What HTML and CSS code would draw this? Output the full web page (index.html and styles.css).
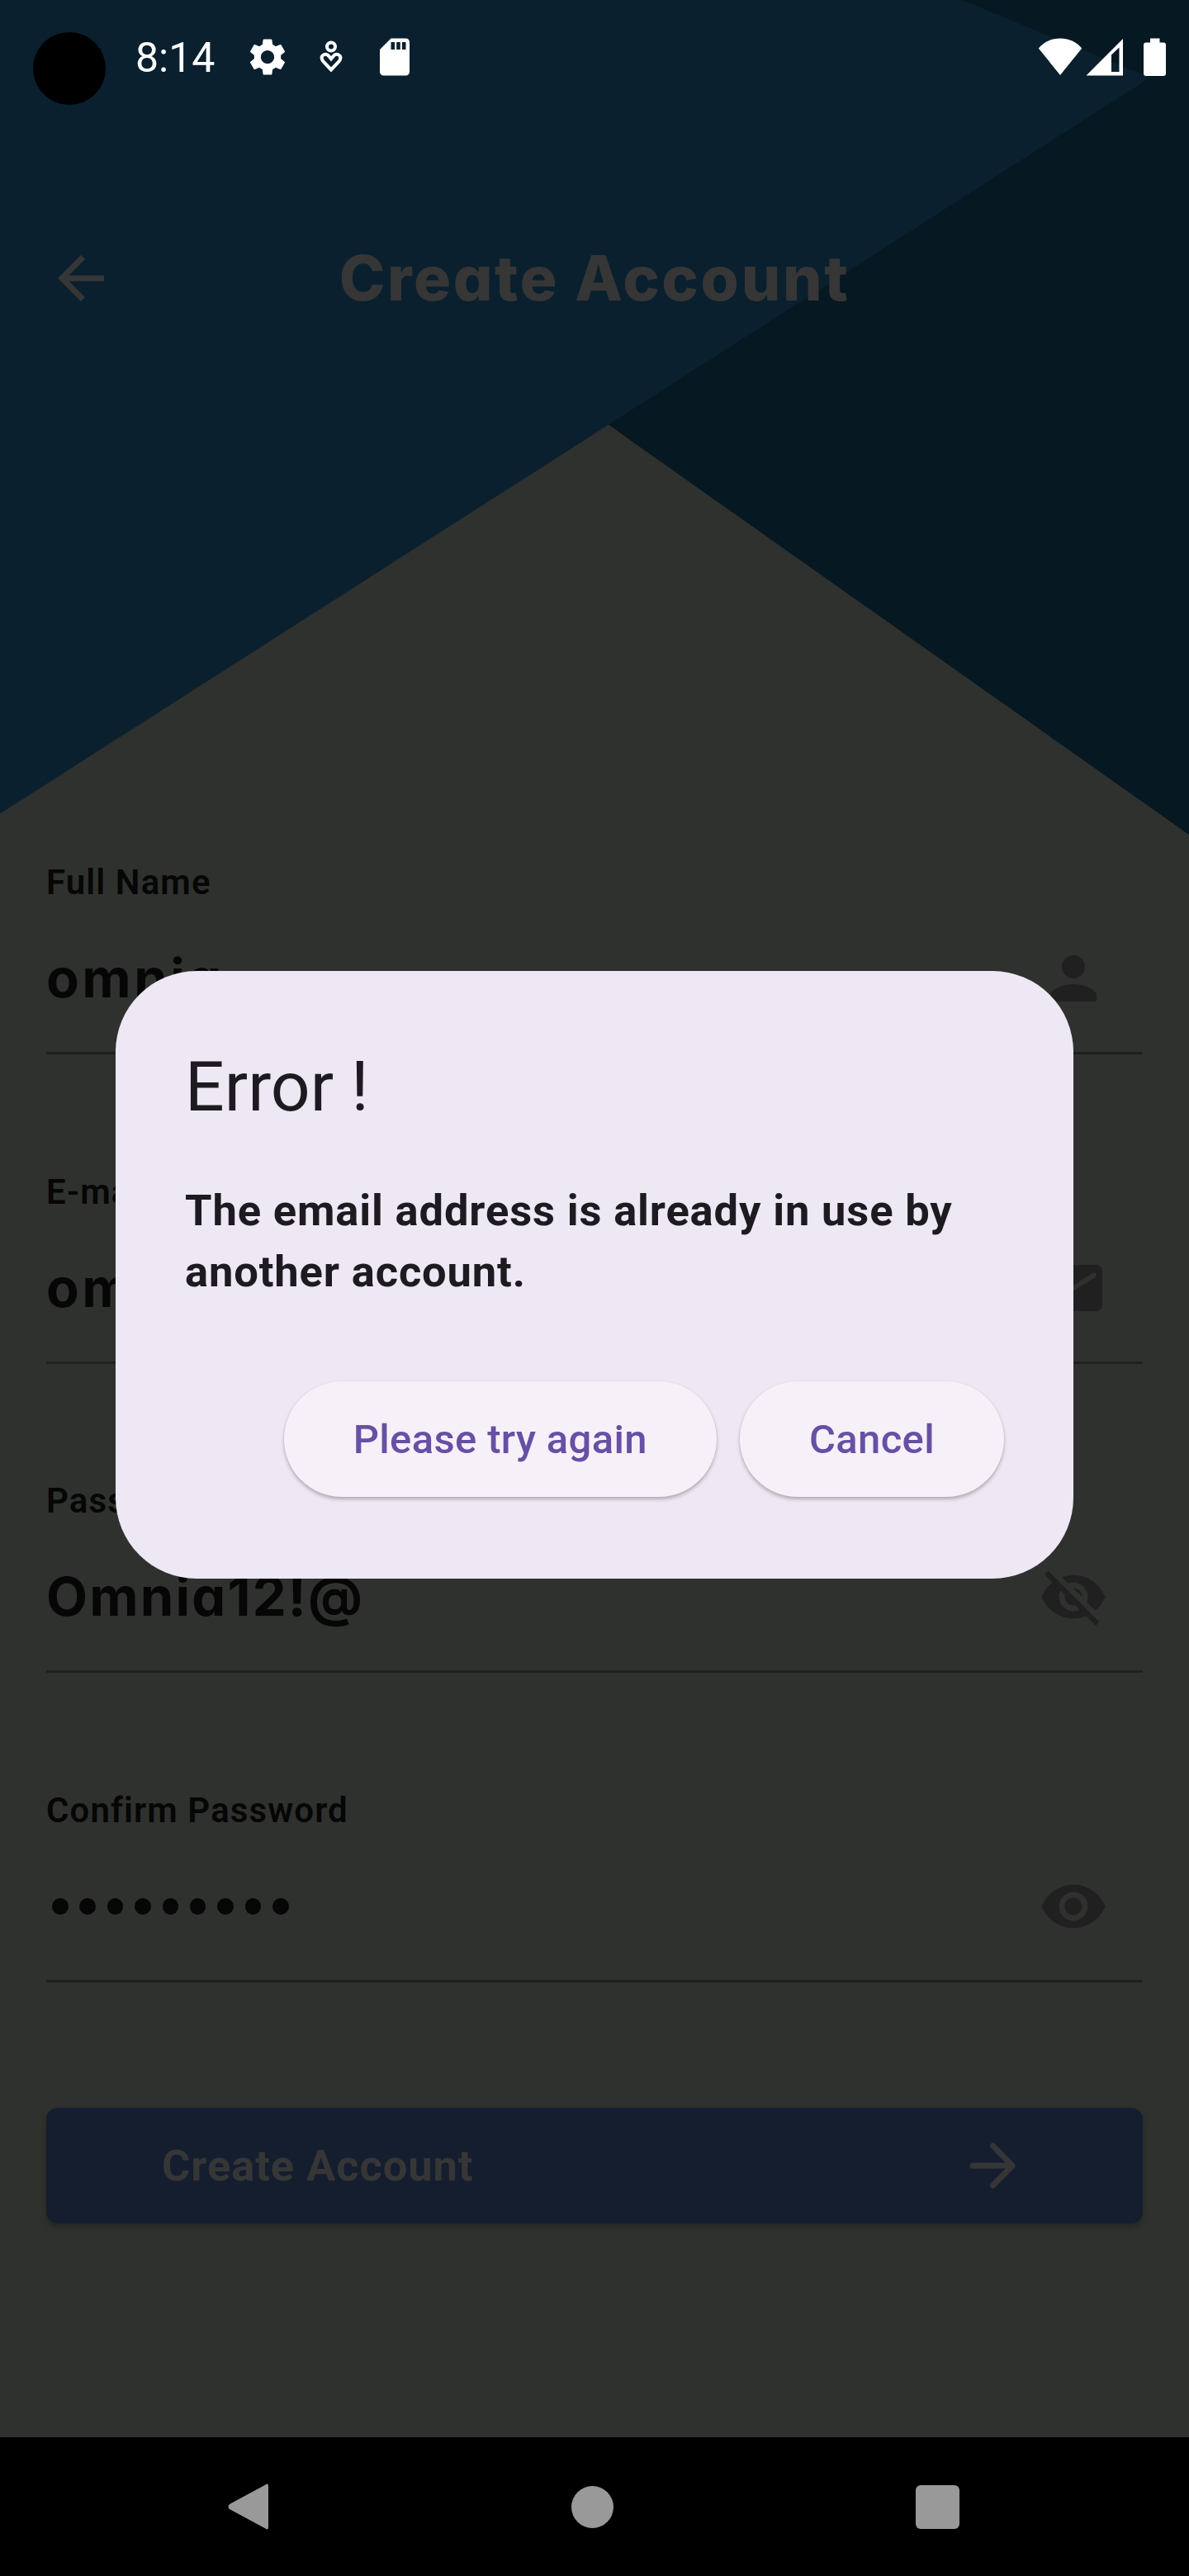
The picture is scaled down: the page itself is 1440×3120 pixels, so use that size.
FILE: index.html
```html
<!DOCTYPE html>
<html lang="en">
<head>
<meta charset="utf-8">
<title>Create Account</title>
<link rel="stylesheet" href="styles.css">
</head>
<body>
<div class="screen">
  <svg class="backdrop" viewBox="0 0 1440 1100" aria-hidden="true">
    <path class="shade-dark" d="M0 0H1440V1011L737 514.500Z"/>
    <path class="shade-blue" d="M0 0H1165L1393 94L737 514.500L0 985.500Z"/>
  </svg>

  <div class="status">
    <span class="camera"></span>
    <span class="clock">8:14</span>
    <svg class="st-icon gear" viewBox="0 0 24 24"><path d="M19.140 12.940c.04-.3.060-.61.060-.94 0-.32-.02-.64-.07-.94l2.030-1.580c.18-.14.23-.41.120-.61l-1.920-3.320c-.12-.22-.37-.29-.59-.22l-2.390.96c-.5-.38-1.030-.7-1.620-.94l-.36-2.540c-.04-.24-.24-.41-.48-.41h-3.840c-.24 0-.43.170-.47.410l-.36 2.540c-.59.240-1.130.570-1.620.940l-2.390-.96c-.22-.08-.47 0-.59.220L2.740 8.870c-.12.210-.08.470.120.610l2.030 1.580c-.05.3-.09.630-.09.940s.02.640.070.940l-2.030 1.580c-.18.140-.23.410-.12.610l1.920 3.320c.12.220.370.290.590.220l2.390-.96c.5.380 1.030.7 1.620.940l.36 2.540c.05.240.24.410.48.410h3.840c.24 0 .44-.17.470-.41l.36-2.540c.59-.24 1.130-.56 1.620-.94l2.390.96c.22.080.47 0 .59-.22l1.920-3.320c.12-.22.070-.47-.12-.61l-2.010-1.580zM12 15.600c-1.980 0-3.600-1.620-3.600-3.600s1.620-3.600 3.600-3.600 3.600 1.620 3.600 3.600-1.620 3.600-3.600 3.600z"/></svg>
    <svg class="heart" viewBox="0 0 28 40"><circle cx="14" cy="7.500" r="5"/><path d="M14 35.500L4.500 25.500C2.500 23 2 20.500 3.500 18.500C6 15.500 9.500 16.500 11.300 19L14 22.300L16.700 19C18.500 16.500 22 15.500 24.500 18.500C26 20.500 25.500 23 23.500 25.500Z"/></svg>
    <svg class="st-icon" viewBox="0 0 24 24"><path d="M18 2h-8L4.020 8 4 20c0 1.100.9 2 2 2h12c1.100 0 2-.9 2-2V4c0-1.100-.9-2-2-2zm-6 6h-2V4h2v4zm3 0h-2V4h2v4zm3 0h-2V4h2v4z"/></svg>
    <svg class="signals" viewBox="0 0 156 50">
      <path d="M27 47L.8 14.500C7.500 6.500 16.500 2.500 27 2.500S46.500 6.500 53.200 14.500Z"/>
      <path fill-rule="evenodd" d="M58.500 47.500L103 3V47.500ZM89 22.500V43H98.500V13.500Z"/>
      <path d="M136 2.500h11.500v5h4.500q3 0 3 3v34.500q0 3-3 3h-21q-3 0-3-3v-34.500q0-3 3-3h5z"/>
    </svg>
  </div>

  <header class="top">
    <svg class="icon back" viewBox="0 0 24 24"><path d="M20 11H7.830l5.590-5.590L12 4l-8 8 8 8 1.410-1.410L7.830 13H20v-2z"/></svg>
    <h1 class="title">Create Account</h1>
  </header>

  <main class="form">
    <div class="field">
      <div class="label">Full Name</div>
      <div class="row"><span class="value">omnia</span><svg class="icon" viewBox="0 0 24 24"><path d="M12 12c2.210 0 4-1.790 4-4s-1.790-4-4-4-4 1.790-4 4 1.790 4 4 4zm0 2c-2.670 0-8 1.340-8 4v2h16v-2c0-2.660-5.330-4-8-4z"/></svg></div>
    </div>
    <div class="field">
      <div class="label">E-mail</div>
      <div class="row"><span class="value">omnia</span><svg class="icon" viewBox="0 0 24 24"><path d="M20 4H4c-1.100 0-1.990.9-1.990 2L2 18c0 1.100.9 2 2 2h16c1.100 0 2-.9 2-2V6c0-1.100-.9-2-2-2zm-.4 4.250l-7.070 4.420c-.32.2-.74.2-1.060 0L4.400 8.250c-.25-.16-.4-.43-.4-.72 0-.67.730-1.070 1.300-.72L12 11l6.700-4.190c.57-.35 1.300.05 1.300.72 0 .29-.15.560-.4.720z"/></svg></div>
    </div>
    <div class="field">
      <div class="label">Password</div>
      <div class="row"><span class="value secret">Omnia12!@</span><svg class="icon" viewBox="0 0 24 24"><path d="M12 7c2.760 0 5 2.240 5 5 0 .65-.13 1.260-.36 1.830l2.920 2.920c1.510-1.260 2.700-2.890 3.430-4.750-1.730-4.390-6-7.500-11-7.500-1.400 0-2.740.25-3.980.7l2.160 2.160C10.740 7.130 11.350 7 12 7zM2 4.270l2.280 2.280.46.460C3.080 8.300 1.780 10.020 1 12c1.730 4.390 6 7.500 11 7.500 1.550 0 3.030-.3 4.380-.84l.42.420L19.730 22 21 20.730 3.270 3 2 4.270zM7.530 9.800l1.550 1.550c-.05.210-.08.430-.08.650 0 1.660 1.340 3 3 3 .22 0 .44-.03.650-.08l1.550 1.550c-.67.330-1.410.530-2.200.530-2.760 0-5-2.240-5-5 0-.79.2-1.530.530-2.200zm4.310-.78l3.150 3.150.02-.16c0-1.660-1.340-3-3-3l-.17.010z"/></svg></div>
    </div>
    <div class="field">
      <div class="label">Confirm Password</div>
      <div class="row"><span class="dots"><i></i><i></i><i></i><i></i><i></i><i></i><i></i><i></i><i></i></span><svg class="icon" viewBox="0 0 24 24"><path d="M12 4.500C7 4.500 2.730 7.610 1 12c1.730 4.390 6 7.500 11 7.500s9.270-3.110 11-7.500c-1.730-4.390-6-7.500-11-7.500zM12 17c-2.760 0-5-2.240-5-5s2.240-5 5-5 5 2.240 5 5-2.240 5-5 5zm0-8c-1.660 0-3 1.340-3 3s1.340 3 3 3 3-1.340 3-3-1.340-3-3-3z"/></svg></div>
    </div>
    <div class="submit">
      <span class="submit-text">Create Account</span>
      <svg class="go" viewBox="0 0 56 56"><path d="M4 28H51M28.500 4L52 28L28.500 52"/></svg>
    </div>
  </main>

  <nav class="nav">
    <svg viewBox="0 0 50 56"><path d="M49 3V53Q49 57 45.500 54.500L2 31Q-1 28 2 25L45.500 1.500Q49-1 49 3Z"/></svg>
    <span class="home"></span>
    <span class="recent"></span>
  </nav>

  <section class="dialog" role="alertdialog">
    <h2 class="d-title">Error !</h2>
    <p class="d-text">The email address is already in use by<br>another account.</p>
    <div class="actions">
      <span class="btn">Please try again</span>
      <span class="btn">Cancel</span>
    </div>
  </section>
</div>
</body>
</html>
```
FILE: styles.css
```css
* { box-sizing: border-box; }
body { margin: 0; background: #2f312e; font-family: Roboto, "Liberation Sans", sans-serif; }
h1, h2, p { margin: 0; }
svg { display: block; flex: none; }
.screen { position: relative; width: 1440px; height: 3120px; display: flex; flex-direction: column; background: #2f312e; overflow: hidden; white-space: nowrap; }
.backdrop { position: absolute; left: 0; top: 0; width: 1440px; height: 1100px; }
.shade-dark { fill: #061821; }
.shade-blue { fill: #0a202e; }
.status, .top, .form, .nav { position: relative; }

.status { height: 137px; display: flex; align-items: center; padding: 0 27px 0 40px; fill: #fff; color: #fff; }
.camera { width: 88px; height: 88px; margin-top: 29px; border-radius: 50%; background: #000; }
.clock { width: 132px; margin: 2px 0 0 36px; font-size: 50px; line-height: 60px; }
.st-icon { width: 54px; height: 54px; }
.gear { margin: 0 36px 0 1px; }
.heart { width: 28px; height: 40px; margin-right: 36px; fill: none; stroke: #fff; stroke-width: 4; }
.signals { width: 156px; height: 50px; margin-left: auto; }

.top { height: 902px; padding: 158px 56px 0; display: grid; grid-template-columns: 84px 1fr 84px; align-items: start; color: #363636; fill: #363636; }
.icon { width: 84px; height: 84px; }
.title { text-align: center; font: 800 75px/84px Inter, sans-serif; font-feature-settings: "cv11"; letter-spacing: 2.600px; }

.form { flex: 1; padding: 0 56px; }
.field { height: 238px; margin-bottom: 136.500px; border-bottom: 3.500px solid #202020; color: #060606; }
.label { height: 60px; font-size: 42px; line-height: 60px; font-weight: 600; letter-spacing: 1.100px; }
.row { display: flex; align-items: center; justify-content: space-between; margin-top: 44px; padding-right: 42px; height: 84px; fill: #202020; }
.value { font: 700 65px/84px Inter, sans-serif; font-feature-settings: "cv11"; letter-spacing: 3.500px; }
.secret { letter-spacing: 2.200px; }
.dots { display: flex; gap: 13.900px; padding-left: 7px; }
.dots i { width: 19.500px; height: 20px; border-radius: 50%; background: #060606; }
.submit { height: 140px; margin-top: 152px; padding: 0 154px 0 140px; display: flex; align-items: center; justify-content: space-between; border-radius: 14px; background: #141e2f; color: #363636; box-shadow: 0 4px 7px rgba(0,0,0,.25); }
.submit-text { font-size: 52.500px; font-weight: 700; line-height: 64px; letter-spacing: .9px; }
.go { width: 56px; height: 56px; fill: none; stroke: #363636; stroke-width: 7; stroke-linecap: round; stroke-linejoin: round; }

.nav { height: 168px; padding: 0 278px 0 276px; display: grid; grid-template-columns: 50px 1fr 53px; align-items: center; background: #000; fill: #999; }
.nav svg { width: 50px; height: 56px; }
.home { justify-self: center; width: 51px; height: 51px; border-radius: 50%; background: #999; }
.recent { width: 53px; height: 53px; border-radius: 6px; background: #999; }

.dialog { position: absolute; left: 140px; top: 1176px; width: 1160px; height: 736px; padding: 84px; border-radius: 98px; background: #eee8f4; color: #1d1b20; }
.d-title { font-size: 84px; font-weight: 400; line-height: 114px; }
.d-text { margin-top: 56px; font-size: 52.500px; font-weight: 700; line-height: 73.500px; letter-spacing: .85px; }
.actions { display: flex; justify-content: flex-end; gap: 28px; margin-top: 96px; }
.btn { height: 140px; padding: 0 84px; border-radius: 70px; background: #f6f1f9; color: #6750a4; font-size: 49px; font-weight: 500; line-height: 141px; letter-spacing: .35px; box-shadow: 0 3px 4px rgba(0,0,0,.25), 0 0 2px rgba(0,0,0,.08); }
```
